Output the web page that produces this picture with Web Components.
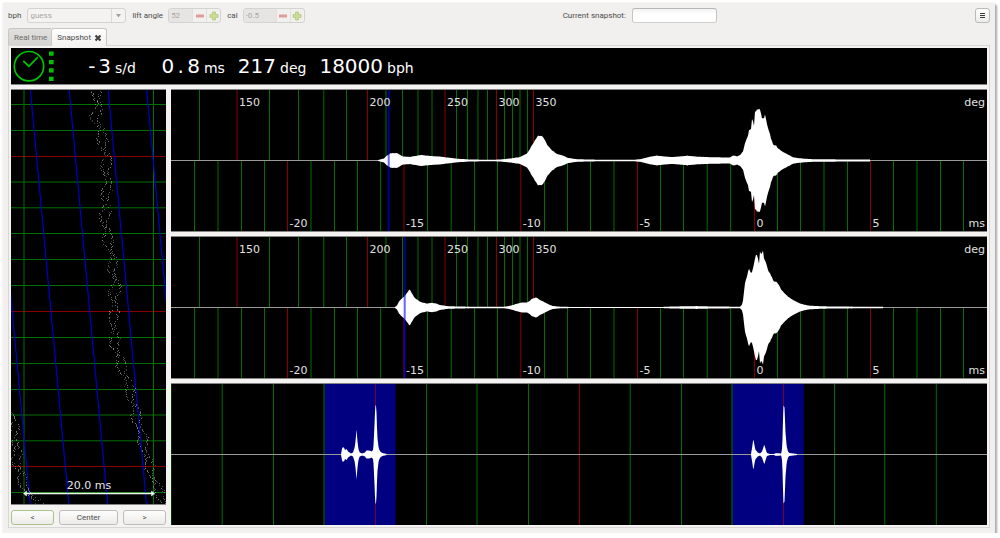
<!DOCTYPE html>
<html lang="en">
<head>
<meta charset="utf-8">
<title>Watch timing</title>
<style>
  body { margin: 0; background: #fff; font: 8px/12px Roboto, sans-serif; color: #4c4c4c; }
</style>
</head>
<body>
<timing-window></timing-window>

<script>
const SANS = '"DejaVu Sans", sans-serif';
const define = (name, html, setup) => customElements.define(name, class extends HTMLElement {
  connectedCallback() {
    if (this.shadowRoot) return;
    const root = this.attachShadow({ mode: 'open' });
    root.innerHTML = typeof html === 'function' ? html(this) : html;
    if (setup) setup(this, root);
  }
});

/* Repeatable noise, so a trace looks the same each time it is drawn */
const noise = n => { const v = Math.sin(n * 127.1 + 11.7) * 43758.5453; return v - Math.floor(v); };

/* Linear interpolation over a flat list x0,v0,x1,v1,... */
const sample = (list, x) => {
  for (let i = 2; i < list.length; i += 2) {
    if (x <= list[i]) {
      const t = (x - list[i - 2]) / (list[i] - list[i - 2]);
      return list[i - 1] + t * (list[i + 1] - list[i - 1]);
    }
  }
  return 0;
};

const W = 816;
const pct = x => (x / W * 100).toFixed(4) + '%';
const vline = (x, color, from = '0%', to = '100%') =>
  `<line x1="${pct(x)}" x2="${pct(x)}" y1="${from}" y2="${to}" stroke="${color}"/>`;

/* Filled envelope, mirrored about the zero line */
const envelope = (list, rough) => {
  const up = [], down = [];
  const step = rough ? 1 : 0.5;
  for (let x = list[0]; x <= list[list.length - 2]; x += step) {
    let a = sample(list, x);
    if (rough) a *= 1 + (noise(Math.floor(x)) - 0.5) * 0.05;
    up.push(`${x.toFixed(1)},${(-a).toFixed(2)}`);
    down.unshift(`${x.toFixed(1)},${a.toFixed(2)}`);
  }
  return `<polygon fill="#fff" points="${up.concat(down).join(' ')}"/>`;
};
const wave = lists => `<svg viewBox="0 -71.5 ${W} 143" preserveAspectRatio="none" width="100%" height="100%">${lists}</svg>`;

const GREEN = '#007000', RED = '#8a0000';
const DEG = [28.5, 66, 98.5, 127.5, 152.8, 175.5, 196.5, 215, 231.5, 247, 261, 274, 285.5, 296.5, 307, 316.5, 325.5, 333.5, 341.5, 349, 356.5, 362.5];
const DEG_MAJOR = { 66: 150, 196.5: 200, 274: 250, 325.5: 300, 362.5: 350 };
const MS = [23.5, 47, 70.5, 93.5, 116.5, 140, 163.5, 186.5, 209.6, 233, 256.5, 280.2, 303.5, 326.5, 349.8, 373.5, 396.5, 419.5, 443, 466.5, 489.5, 512.5, 536.2, 559.6, 583.4, 606.5, 629.5, 653, 676.5, 699.5, 722.5, 746, 769.5, 792.5];

const WAVES = {
  tic: [207,.3,209,1,213,2,216,5,219,7,224,7.5,227,7,230,5,232,4,239,3.6,245,4.6,250,5.6,254,5,261,4.4,269,4,276,3,286,1.8,299,1,319,.7,329,1,339,2,349,3.5,356,7,361,15,364,20,367,24.5,370,25,373,22,376,16,380,11,382,9.5,386,6.5,391,5.2,397,2.6,404,1.5,414,1,429,.8,464,.8,470,1.5,479,3.8,486,4.8,491,4.2,501,3.4,509,4,516,4.8,526,3.8,539,3.4,555,3,559,3,562,5,566,4.2,569,5.4,572,9,574,17,577,25,578,30,580,31,581,41,582,40,583,35,584,49,587,52,589,50,591,43,593,43,594,46,596,36,598,30,600,22,602,16,605,15,607,12,612,8.5,619,5,622,3.2,629,2.2,639,1.4,652,1.2,699,.9],
  toc: [224,.4,226,2,228,6,231,9,233,11,235,13,237,16,239,18,241,14,243,10.5,245,8.6,248,6.5,251,5,256,4,261,4.8,265,4,269,2.5,277,1.3,292,.9,332,.7,337,1.3,342,2.5,347,4,351,5,356,5,359,7,361,8.6,365,10,369,7.5,374,5,379,2.5,382,1.5,389,.8,404,.5,490,.5,501,1,526,1.4,541,1,569,.8,571,3,572,7,574,24,576,31,577,36,578,38,580,34,581,35,582,40,584,49,585,54,587,50,588,43,589,55,590,53,592,58,593,50,595,44,597,38,600,32,602,27,606,25,608,22,610,18,614,13.6,617,11,621,8,624,6.5,629,4,634,2.6,639,1.8,647,1.4,661,1,712,.7],
  beat1: [170,.5,171.3,7,173,7,174,4.5,175.7,5.5,177,3,180,1,182,2,183.7,7,184.7,15,185.5,25,186.4,14,187.3,6,188.7,2,191,1,194,2,195.3,4,198,4,200.7,3,202.3,5,203.3,25,204.3,50,205.3,48,206.3,18,207.7,6,209.3,3,211.3,1.5,215.7,.5],
  beat2: [580,.5,581.3,8,582.3,16,583.3,10,584.3,5,586.7,2,589,1,591,3,592.3,7,593.3,10,594.7,5,596,1.5,599,.5,603.3,.5,604.7,1.4,610.3,1,611.3,8,612,35,612.5,49,613.5,47,614.5,22,615.7,8,617,3,618.3,1.5,626.3,.5]
};

/* Impulse response of one side of the beat, with amplitude and time scales */
define('wave-chart', el => {
  const mark = +el.getAttribute('mark');
  let s = '', labels = '';
  for (const x of DEG) {
    const label = DEG_MAJOR[x];
    s += vline(x, label ? RED : GREEN, '0%', '50%');
    if (label) labels += `<text x="${pct(x)}" dx="2" y="17">${label}</text>`;
  }
  MS.forEach((x, i) => {
    const ms = i - 24, major = ms % 5 === 0;
    s += vline(x, major ? RED : GREEN, '50%', '100%');
    if (major) labels += `<text x="${pct(x)}" dx="2" y="138">${ms}</text>`;
  });
  s += `<line x1="0" x2="100%" y1="50%" y2="50%" stroke="#999"/>`;
  s += wave(envelope(WAVES[el.getAttribute('wave')], true));
  s += `<line x1="${pct(mark)}" x2="${pct(mark)}" y1="0" y2="100%" stroke="#00f" stroke-width="2" opacity=".6"/>`;
  s += labels;
  s += `<text x="100%" dx="-2" y="17" text-anchor="end">deg</text><text x="100%" dx="-2" y="138" text-anchor="end">ms</text>`;
  return `<style>
    :host { display: block; background: #000; overflow: hidden; }
    svg { display: block; }
    .plot { width: 100%; height: 143px; box-sizing: border-box; }
    text { font: 11px ${SANS}; fill: #e0e0e0; }
  </style>
  <svg class="plot" role="img" aria-label="Beat waveform">${s}
    <line x1="0" x2="100%" y1=".5" y2=".5" stroke="#858585"/>
    <line x1="0" x2="100%" y1="142.5" y2="142.5" stroke="#858585"/>
  </svg>`;
});

/* Whole oscillation period, with the windows searched for each beat */
define('period-chart', () => {
  let s = '';
  for (const [a, b] of [[153.5, 224.5], [561, 632.7]])
    s += `<rect x="${pct(a)}" y="0" width="${pct(b - a)}" height="100%" fill="#000080"/>`;
  for (const x of [0, 51.2, 102.5, 153, 255.5, 306, 357.5, 459.2, 510.5, 561, 663.5, 713.8, 765.3]) s += vline(x, GREEN);
  s += vline(408.5, RED) + vline(204.5, '#70003a') + vline(612.5, '#70003a');
  s += `<line x1="0" x2="100%" y1="50%" y2="50%" stroke="#999"/>`;
  s += wave(envelope(WAVES.beat1) + envelope(WAVES.beat2));
  return `<style>
    :host { display: block; background: #000; overflow: hidden; }
    svg { display: block; }
    .plot { width: 100%; height: 143px; }
  </style>
  <svg class="plot" role="img" aria-label="Full period">${s}
    <line x1="0" x2="100%" y1=".5" y2=".5" stroke="#858585"/></svg>`;
});

define('paper-strip', () => {
  let s = '';
  [15.5, 41.5, 67.5, 93, 118.8, 144.5, 170.5, 196.5, 222.5, 248.5, 274.5, 300.5, 326, 351.8, 377.5, 403.5].forEach((y, k) => {
    s += `<path d="M0 ${y}H155" stroke="${k % 6 === 2 ? RED : GREEN}"/>`;
  });
  s += `<path d="M13 0V416M142.5 0V416" stroke="${GREEN}"/>`;
  for (const x of [-19.4, 19.3, 58.1, 97, 135.6]) s += `<path d="M${x} 0L${x + 38.6} 416" stroke="#0000c4" stroke-width="1.2"/>`;
  const main = [0,86,16,86,29,84,39,89,49,91,63,94,76,95,89,96,103,95,119,94,133,94,149,96,163,100,176,101,193,104,209,103,224,102,238,102,258,104,274,109,288,115,304,119,321,124,338,128,354,132,371,136,388,141,401,147,416,154];
  const wrap = [322,0,338,2,354,4,371,6,388,9,403,17,416,28];
  let dots = '';
  const strand = (list, from, seed, shift) => {
    for (let y = from; y < 415; y++) {
      const n = y * 3 + seed;
      if (noise(n) < 0.25) continue;
      const x = Math.round(sample(list, y) + shift * (3 + 2 * Math.sin(y / 4 + seed)) + (noise(n + 0.5) - 0.5) * 3);
      if (x >= 0 && x < 155) dots += `<rect x="${x}" y="${y}" width="1" height="1" opacity="${(0.2 + noise(n + 0.7) * 0.3).toFixed(2)}"/>`;
    }
  };
  strand(main, 2, 1, -1); strand(main, 2, 2.4, 1);
  strand(wrap, 323, 3, -1); strand(wrap, 323, 5.2, 1);
  s += `<g fill="#fff">${dots}</g>`;
  return `<style>
    :host { display: block; background: #000; }
    svg { display: block; }
    text { font: 11px ${SANS}; fill: #e6e6e6; }
  </style>
  <svg width="155" height="416" viewBox="0 0 155 416" role="img" aria-label="Paper strip">${s}
    <path d="M14 404.500H142" stroke="#eafbea" stroke-width="1.500"/>
    <path d="M12.500 404.500l3-2.500v5zM143.500 404.500l-3-2.500v5z" fill="#eafbea" stroke="#eafbea" stroke-width=".5"/>
    <text x="78" y="400" text-anchor="middle">20.0 ms</text>
    <path d="M0 .5H155M0 415.500H155" stroke="#858585"/>
  </svg>`;
});

/* A big number with its unit */
define('read-out', el => {
  const cells = [...el.getAttribute('value')].map(c => /\d/.test(c) ? c : `<i>${c}</i>`).join('');
  return `<style>
    :host { display: flex; align-items: baseline; gap: 4px; padding-top: 2px; color: #fff; font-family: ${SANS}; }
    b { font: 20px/24px ${SANS}; text-align: right; white-space: nowrap; min-width: var(--w, 0); }
    i { display: inline-block; width: 13px; text-align: center; font-style: normal; }
    span { font-size: 14px; line-height: 24px; }
  </style><b>${cells}</b><span><slot></slot></span>`;
});

define('status-bar', `<style>
    :host { display: flex; align-items: center; gap: 13px; height: 36px; background: #000; border-bottom: 1px solid #858585; }
    svg { display: block; flex: none; margin-right: -9px; }
    .rate { --w: 52px; }
    .error { --w: 51px; }
  </style>
  <svg width="44" height="36" viewBox="0 0 44 36" role="img" aria-label="Signal">
    <circle cx="18" cy="18.200" r="14.700" fill="none" stroke="#00c400" stroke-width="1.700"/>
    <path d="M12.300 13l5.700 5.200 8.900-9.200" fill="none" stroke="#00c400" stroke-width="1.700"/>
    <path d="M38 3.500h4.600v4.300H38zM38 12h4.600v4.200H38zM38 20.300h4.600v4.200H38zM38 28.700h4.600V33H38z" fill="#00c400"/>
  </svg>
  <read-out class="rate" value="-3">s/d</read-out>
  <read-out class="error" value="0.8">ms</read-out>
  <read-out value="217">deg</read-out>
  <read-out value="18000">bph</read-out>`);

/* Number box with minus and plus buttons, disabled on a snapshot */
define('spin-box', el => `<style>
    :host { display: flex; align-items: center; gap: 5px; }
    .box { display: flex; height: 15px; box-sizing: border-box; border: 1px solid #d5d3d1; border-radius: 3px; overflow: hidden; background: #f1f0ee; }
    input { width: var(--field, 23px); box-sizing: border-box; border: 0; margin: 0; padding: 0 2px; background: #e6e5e3; color: #a9a7a5; font: 8px Roboto, sans-serif; }
    button { width: 14px; padding: 0; border: 0; border-left: 1px solid #e2e0de; background: none; display: grid; place-items: center; }
    svg { display: block; }
  </style>
  <label for="n">${el.getAttribute('label')}</label>
  <div class="box"><input id="n" type="text" value="${el.getAttribute('value')}" disabled>
    <button type="button" aria-label="Decrease" disabled><svg width="10" height="10"><rect x="1" y="3.500" width="8" height="3" fill="#e09c9a"/></svg></button>
    <button type="button" aria-label="Increase" disabled><svg width="10" height="10"><path d="M3.500 1h3v2.500H9v3H6.500V9h-3V6.500H1v-3h2.500z" fill="#cbdb98" stroke="#b3c67c" stroke-width=".8"/></svg></button>
  </div>`);

define('tool-bar', `<style>
    :host { display: flex; align-items: center; justify-content: space-between; }
    .group, .pick { display: flex; align-items: center; gap: 6px; }
    .drop { position: relative; display: flex; }
    .drop::after { content: ""; position: absolute; right: 14px; top: 1px; bottom: 1px; border-left: 1px solid #dcdad8; pointer-events: none; }
    .drop svg { position: absolute; right: 4px; top: 6px; pointer-events: none; }
    select, input, button { box-sizing: border-box; height: 15px; margin: 0; border: 1px solid #cfcdcb; border-radius: 3px; font: 8px Roboto, sans-serif; }
    select { appearance: none; width: 99px; padding: 0 2px; background: #f4f3f2; color: #a9a7a5; opacity: 1; border-color: #d5d3d1; }
    input { width: 85px; padding: 0 3px; border-color: #b9b7b5 #c6c4c2 #cfcdcb; background: linear-gradient(#f2f2f2, #fff 5px); }
    button { width: 15px; padding: 0; display: grid; place-items: center; background: linear-gradient(#fff, #ececea); border-color: #bcbab8; }
    svg { display: block; }
  </style>
  <div class="group">
    <div class="pick"><label for="bph">bph</label>
      <div class="drop"><select id="bph" disabled><option>guess</option></select>
        <svg width="7" height="4"><path d="M1 0h5L3.500 3.500z" fill="#a3a19f"/></svg></div></div>
    <spin-box label="lift angle" value="52"></spin-box>
    <spin-box label="cal" value="-0.5" style="--field:32px"></spin-box>
  </div>
  <div class="pick"><label for="snap">Current snapshot:</label><input id="snap" type="text"></div>
  <button type="button" aria-label="Menu"><svg width="5" height="7"><path d="M0 1.500h5M0 3.500h5M0 5.500h5" stroke="#3c3c3c"/></svg></button>`);

define('tab-strip', `<style>
    :host { display: flex; position: relative; z-index: 1; margin-bottom: -1px; }
    .tab { box-sizing: border-box; height: 18px; display: flex; align-items: center; gap: 3px; padding: 0 4px 0 5px; border: 1px solid #c9c7c5; border-radius: 3px 3px 0 0; }
    .back { height: 17px; padding-top: 2px; border-right: 0; border-bottom: 0; background: linear-gradient(#e2e0de, #d6d4d2); border-top-right-radius: 0; }
    .front { background: linear-gradient(#fdfdfd, #f3f2f1); border-bottom: 0; }
    button { all: unset; display: block; font: inherit; color: inherit; }
    .back button { color: #6e6c6a; }
    svg { display: block; }
  </style>
  <div class="tab back"><button type="button">Real time</button></div>
  <div class="tab front"><button type="button">Snapshot</button>
    <button type="button" aria-label="Close snapshot"><svg width="8" height="8"><path d="M1.500 1.500l5 5M6.500 1.500l-5 5" stroke="#444" stroke-width="2.200"/></svg></button></div>`);

define('strip-buttons', `<style>
    :host { display: grid; grid-template-columns: 43px 1fr 43px; gap: 5px; }
    button { box-sizing: border-box; height: 15px; padding: 0; border: 1px solid #bfbdbb; border-radius: 3px; background: linear-gradient(#fdfdfd, #ecebe9); font: 8px Roboto, sans-serif; color: #4c4c4c; }
    .focus { border-color: #a9c48a; }
  </style>
  <button type="button" class="focus">&lt;</button><button type="button">Center</button><button type="button">&gt;</button>`);

define('timing-window', `<style>
    :host { display: block; margin: 3px 5px 0 3px; padding: 5px; background: #f1f0ee; box-shadow: 2px 2px 2px #a8a8a8, 0 0 2px #e2e2e2; }
    tool-bar { margin-bottom: 5px; }
    main { border: 1px solid #d9d7d5; padding: 2px; background: #f4f3f1; display: grid; gap: 4px; }
    .panes { display: grid; grid-template-columns: 155px minmax(0, 1fr); gap: 5px; align-items: start; }
    .left { display: grid; gap: 5px; }
    .right { display: grid; gap: 4px; grid-template-rows: auto auto 142px; }
  </style>
  <tool-bar></tool-bar>
  <tab-strip></tab-strip>
  <main>
    <status-bar></status-bar>
    <div class="panes">
      <div class="left"><paper-strip></paper-strip><strip-buttons></strip-buttons></div>
      <div class="right">
        <wave-chart wave="tic" mark="217.700"></wave-chart>
        <wave-chart wave="toc" mark="233.700"></wave-chart>
        <period-chart></period-chart>
      </div>
    </div>
  </main>`);
</script>
</body>
</html>
